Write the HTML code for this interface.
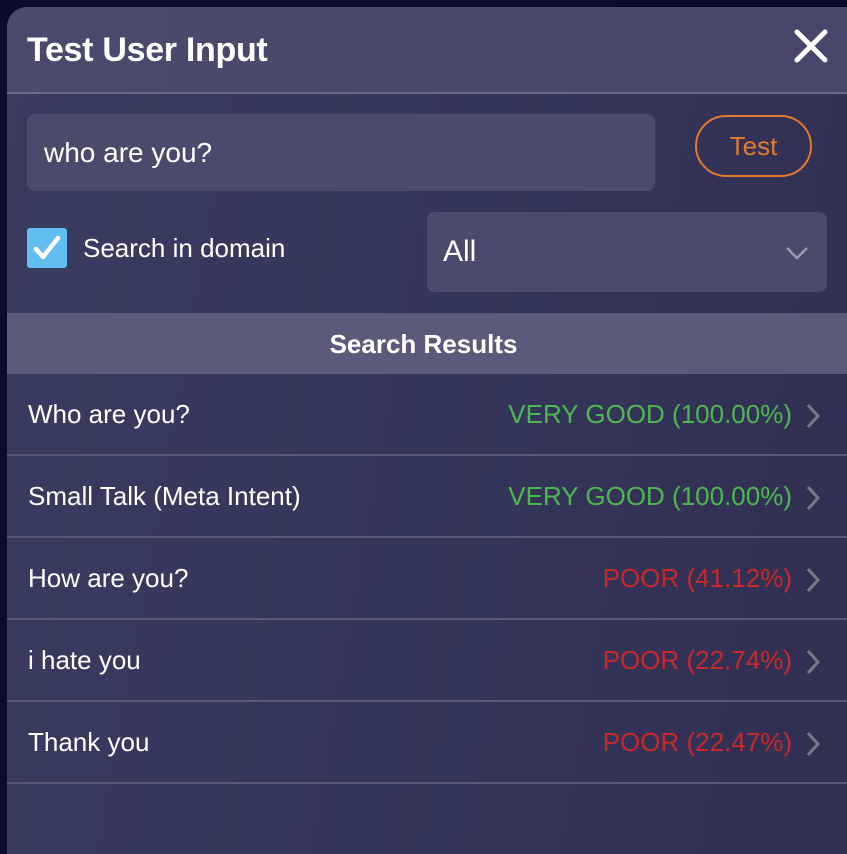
<!DOCTYPE html>
<html><head><meta charset="utf-8"><style>
html,body{margin:0;padding:0;width:847px;height:854px;overflow:hidden;background:#0b0b2e;font-family:"Liberation Sans",sans-serif;}
.panel{position:absolute;left:7px;top:7px;width:860px;height:847px;border-radius:20px 20px 0 0;overflow:hidden;background:linear-gradient(100deg,#3a3b60 0%,#35365b 50%,#312f52 100%);}
.header{position:absolute;left:0;top:0;right:0;height:85px;background:linear-gradient(90deg,#4a4a6c,#48466a);border-bottom:2px solid #6a6a88;}
.title{position:absolute;left:20px;top:24px;color:#fff;font-size:34px;font-weight:bold;letter-spacing:-0.3px;}
.close{position:absolute;left:787px;top:22px;}
.input{position:absolute;left:20px;top:107px;width:628px;height:77px;background:#4a4a6c;border-radius:8px;color:#fff;font-size:28px;line-height:77px;padding-left:17px;box-sizing:border-box;}
.btn{position:absolute;left:688px;top:108px;width:117px;height:62px;border:2px solid #e37a2c;border-radius:32px;box-sizing:border-box;color:#e37a2c;font-size:26px;text-align:center;line-height:58px;}
.cb{position:absolute;left:20px;top:221px;width:40px;height:40px;background:#62bdf0;border-radius:3px;}
.cbl{position:absolute;left:76px;top:226px;color:#fff;font-size:26px;}
.sel{position:absolute;left:420px;top:205px;width:400px;height:80px;background:#4a4a6c;border-radius:8px;color:#fff;font-size:30px;line-height:80px;padding-left:16px;box-sizing:border-box;}
.chev{position:absolute;right:18px;top:34px;}
.sr{position:absolute;left:0;top:306px;right:0;height:61px;background:#5c5a7a;color:#fff;font-size:26px;font-weight:bold;text-align:center;line-height:63px;padding-right:27px;}
.row{position:absolute;left:0;right:0;height:80px;border-bottom:2px solid #595977;}
.row .l{position:absolute;left:21px;top:25px;color:#fff;font-size:26px;}
.row .r{position:absolute;right:75px;top:25px;font-size:26px;}
.row .a{position:absolute;left:798px;top:29px;}
.g{color:#4db84f}.p{color:#c8282a}
</style></head><body>
<div class="panel">
 <div class="header"><div class="title">Test User Input</div>
  <svg class="close" width="34" height="34" viewBox="0 0 34 34"><path d="M3 3L31 31M31 3L3 31" stroke="#fff" stroke-width="5" stroke-linecap="round"/></svg></div>
 <div class="input">who are you?</div>
 <div class="btn">Test</div>
 <div class="cb"><svg width="40" height="40" viewBox="0 0 40 40"><path d="M9 21L16 29L31 10" fill="none" stroke="#fff" stroke-width="4.5" stroke-linecap="round" stroke-linejoin="round"/></svg></div>
 <div class="cbl">Search in domain</div>
 <div class="sel">All<svg class="chev" width="24" height="14" viewBox="0 0 24 14"><path d="M2 2L12 12L22 2" fill="none" stroke="#9a9ab0" stroke-width="2.5"/></svg></div>
 <div class="sr">Search Results</div>
 <div class="row" style="top:367px"><div class="l">Who are you?</div><div class="r g">VERY GOOD (100.00%)</div><svg class="a" width="16" height="26" viewBox="0 0 16 26"><path d="M3 2L13 13L3 24" fill="none" stroke="#7a7a86" stroke-width="3"/></svg></div>
 <div class="row" style="top:449px"><div class="l">Small Talk (Meta Intent)</div><div class="r g">VERY GOOD (100.00%)</div><svg class="a" width="16" height="26" viewBox="0 0 16 26"><path d="M3 2L13 13L3 24" fill="none" stroke="#7a7a86" stroke-width="3"/></svg></div>
 <div class="row" style="top:531px"><div class="l">How are you?</div><div class="r p">POOR (41.12%)</div><svg class="a" width="16" height="26" viewBox="0 0 16 26"><path d="M3 2L13 13L3 24" fill="none" stroke="#7a7a86" stroke-width="3"/></svg></div>
 <div class="row" style="top:613px"><div class="l">i hate you</div><div class="r p">POOR (22.74%)</div><svg class="a" width="16" height="26" viewBox="0 0 16 26"><path d="M3 2L13 13L3 24" fill="none" stroke="#7a7a86" stroke-width="3"/></svg></div>
 <div class="row" style="top:695px"><div class="l">Thank you</div><div class="r p">POOR (22.47%)</div><svg class="a" width="16" height="26" viewBox="0 0 16 26"><path d="M3 2L13 13L3 24" fill="none" stroke="#7a7a86" stroke-width="3"/></svg></div>
</div>
</body></html>
